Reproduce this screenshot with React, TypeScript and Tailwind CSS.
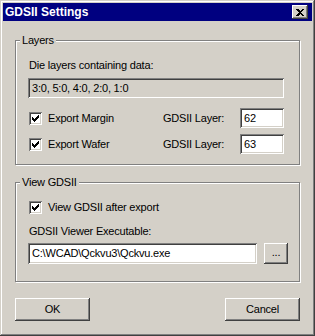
import React from "react";

const sunken =
  "shadow-[inset_1px_1px_0_#808080,inset_-1px_-1px_0_#ffffff,inset_2px_2px_0_#404040,inset_-2px_-2px_0_#d4d0c8]";
const raised =
  "shadow-[inset_-1px_-1px_0_#404040,inset_1px_1px_0_#ffffff,inset_-2px_-2px_0_#808080]";

function CheckBox({ label }: { label: string }) {
  return (
    <div className="flex items-center">
      <span className={`w-[13px] h-[13px] ml-[1px] bg-white shrink-0 relative ${sunken}`}>
        <svg width="13" height="13" viewBox="0 0 13 13" className="absolute inset-0" shapeRendering="crispEdges">
          <polygon points="3,5 5,7 10,2 10,5 5,10 3,8" fill="#000" />
        </svg>
      </span>
      <span className="ml-[6px] whitespace-nowrap">{label}</span>
    </div>
  );
}

function Group({ title, className, children }: { title: string; className: string; children: React.ReactNode }) {
  return (
    <div
      className={`relative w-[285px] border border-[#808080] shadow-[inset_1px_1px_0_#ffffff,1px_1px_0_#ffffff] ${className}`}
    >
      <span className="absolute top-[-7px] left-[4px] px-[2px] bg-[#d4d0c8] leading-[13px]">{title}</span>
      {children}
    </div>
  );
}

function Button({ children, className = "" }: { children: React.ReactNode; className?: string }) {
  return (
    <button className={`bg-[#d4d0c8] flex items-center justify-center leading-[13px] ${raised} ${className}`}>
      {children}
    </button>
  );
}

export default function App() {
  return (
    <div
      className="w-[315px] h-[336px] bg-[#d4d0c8] p-[3px] text-[11px] leading-[13px] tracking-[-0.2px] text-black font-['Liberation_Sans',Arial,sans-serif] shadow-[inset_-1px_-1px_0_#404040,inset_1px_1px_0_#d4d0c8,inset_-2px_-2px_0_#808080,inset_2px_2px_0_#ffffff]"
    >
      {/* Title bar */}
      <div className="h-[18px] bg-[#000080] flex items-center justify-between pl-[2px] pr-[4px]">
        <span className="text-white font-bold text-[12px] tracking-normal">GDSII Settings</span>
        <span className={`w-[16px] h-[14px] bg-[#d4d0c8] flex items-center justify-center ${raised}`}>
          <svg width="8" height="7" viewBox="0 0 8 7" shapeRendering="crispEdges">
            <path d="M0 0h2l2 2 2-2h2L5 3.5 8 7H6L4 5 2 7H0l3-3.5z" fill="#000" />
          </svg>
        </span>
      </div>

      <div className="px-[12px]">
        {/* Layers */}
        <Group title="Layers" className="mt-[19px] h-[125px]">
          <div className="pl-[12px]">
            <div className="mt-[18px] pl-[1px]">Die layers containing data:</div>
            <div className={`mt-[6px] h-[20px] w-[256px] flex items-center pl-[4px] ${sunken}`}>
              3:0, 5:0, 4:0, 2:0, 1:0
            </div>
            <div className="mt-[10px] h-[20px] flex items-center">
              <div className="w-[135px]">
                <CheckBox label="Export Margin" />
              </div>
              <span className="w-[77px]">GDSII Layer:</span>
              <div className={`w-[44px] h-[20px] bg-white flex items-center pl-[4px] ${sunken}`}>62</div>
            </div>
            <div className="mt-[6px] h-[20px] flex items-center">
              <div className="w-[135px]">
                <CheckBox label="Export Wafer" />
              </div>
              <span className="w-[77px]">GDSII Layer:</span>
              <div className={`w-[44px] h-[20px] bg-white flex items-center pl-[4px] ${sunken}`}>63</div>
            </div>
          </div>
        </Group>

        {/* View GDSII */}
        <Group title="View GDSII" className="mt-[17px] h-[100px]">
          <div className="pl-[12px]">
            <div className="mt-[18px]">
              <CheckBox label="View GDSII after export" />
            </div>
            <div className="mt-[11px] pl-[1px]">GDSII Viewer Executable:</div>
            <div className="mt-[5px] flex items-center gap-[7px]">
              <div className={`w-[229px] h-[21px] bg-white flex items-center pl-[4px] ${sunken}`}>
                C:\WCAD\Qckvu3\Qckvu.exe
              </div>
              <Button className="w-[24px] h-[21px] pb-[3px]">...</Button>
            </div>
          </div>
        </Group>

        {/* Buttons */}
        <div className="mt-[16px] w-[285px] flex justify-between">
          <Button className="w-[75px] h-[23px]">OK</Button>
          <Button className="w-[75px] h-[23px]">Cancel</Button>
        </div>
      </div>
    </div>
  );
}
